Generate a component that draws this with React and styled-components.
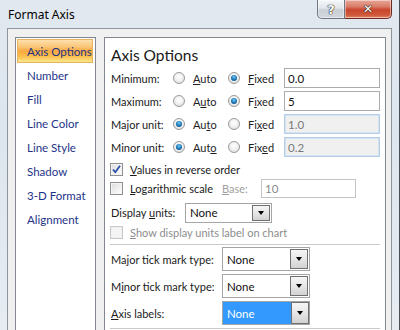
import React from "react";
import styled, { createGlobalStyle } from "styled-components";

const Global = createGlobalStyle`
  html, body { margin: 0; padding: 0; overflow: hidden; }
  body { font-family: "Lato", "Noto Sans", sans-serif; font-size: 11px; color: #1e1e1e; }
`;

const Window = styled.div`
  width: 400px;
  height: 330px;
  box-sizing: border-box;
  background: linear-gradient(180deg, #e1e8f0 0%, #dde5ee 40%, #e6ecf2 100%);
  border-right: 1px solid #4a4f57;
  display: flex;
  flex-direction: column;
  overflow: hidden;
`;

const TitleBar = styled.div`
  height: 28px;
  display: flex;
  justify-content: space-between;
  align-items: flex-start;
  padding: 0 7px 0 8px;
  flex: none;
`;

const Title = styled.div`
  font-family: "Noto Sans", sans-serif;
  font-size: 12px;
  line-height: 12px;
  margin-top: 9px;
  color: #000;
`;

const Caps = styled.div`
  display: flex;
`;

const CapButton = styled.div`
  height: 19px;
  box-sizing: border-box;
  width: ${(p) => p.$w}px;
  border: 1px solid ${(p) => (p.$close ? "#6e2b24" : "#6f7782")};
  border-top: none;
  border-radius: ${(p) => (p.$close ? "0 0 5px 0" : "0 0 0 5px")};
  border-left-width: ${(p) => (p.$close ? 0 : 1)}px;
  background: ${(p) =>
    p.$close
      ? "linear-gradient(180deg, #e8a697 0%, #d9806c 35%, #c9452c 55%, #cf5a3c 85%, #e58c6a 100%)"
      : "linear-gradient(180deg, #f4f6f8 0%, #e2e6eb 45%, #c9ced5 55%, #d2d7de 100%)"};
  box-shadow: inset 0 0 0 1px rgba(255, 255, 255, 0.45);
  display: flex;
  align-items: center;
  justify-content: center;
  color: #fff;
  font-family: "DejaVu Sans", sans-serif;
  font-weight: bold;
  font-size: ${(p) => (p.$close ? 12 : 13)}px;
  line-height: 1;
  text-shadow: 0 0 1px #1b1b1b, 0 0 1px #1b1b1b, 0 0 1px #333;
`;

const Client = styled.div`
  flex: 1;
  margin: 0 7px 0 7px;
  background: #f0f0f0;
  border: 1px solid #8f959c;
  border-bottom: none;
  display: flex;
  align-items: flex-start;
  padding: 8px 6px 0 7px;
  gap: 8px;
`;

const Nav = styled.div`
  width: 79px;
  height: 300px;
  flex: none;
  background: #fff;
  border: 1px solid #828790;
  padding-top: 1px;
  box-sizing: content-box;
`;

const NavItem = styled.div`
  height: 24px;
  box-sizing: border-box;
  margin-left: 1px;
  width: 76px;
  padding-left: 9px;
  display: flex;
  align-items: center;
  color: #1e3488;
  font-size: 11.5px;
  border: 1px solid ${(p) => (p.$active ? "#e5b564" : "transparent")};
  background: ${(p) =>
    p.$active
      ? "linear-gradient(180deg, #fde0ad 0%, #fbc67a 30%, #f9a93e 50%, #fbc04e 75%, #fde68b 100%)"
      : "transparent"};
  white-space: nowrap;
`;

const Panel = styled.div`
  flex: 1;
  height: 300px;
  background: #fff;
  border: 1px solid #828790;
  padding: 6px 5px 0 6px;
  display: flex;
  flex-direction: column;
`;

const Heading = styled.div`
  font-size: 15.5px;
  line-height: 22px;
  color: #1a1a1a;
  height: 23px;
`;

const OptionRow = styled.div`
  height: 20px;
  display: flex;
  align-items: center;
  margin-top: ${(p) => p.$mt ?? 3}px;
`;

const Label = styled.div`
  width: ${(p) => p.$w}px;
  flex: none;
  white-space: nowrap;
  color: ${(p) => (p.$disabled ? "#a0a0a0" : "#1a1a1a")};
`;

const RadioOption = styled.div`
  width: ${(p) => p.$w}px;
  flex: none;
  display: flex;
  align-items: center;
  gap: 8px;
`;

const Radio = styled.span`
  width: 12px;
  height: 12px;
  box-sizing: border-box;
  border-radius: 50%;
  border: 1px solid #9a9a9a;
  background: radial-gradient(circle at 50% 40%, #ffffff 0%, #f0f0f0 50%, #d6d6d6 100%);
  display: flex;
  align-items: center;
  justify-content: center;
  flex: none;
  &::after {
    content: "";
    display: ${(p) => (p.$on ? "block" : "none")};
    width: 6px;
    height: 6px;
    border-radius: 50%;
    background: radial-gradient(circle at 50% 35%, #7fd0f5 0%, #1f7fc0 45%, #0c3f6e 100%);
  }
`;

const Input = styled.div`
  width: ${(p) => p.$w}px;
  height: 20px;
  box-sizing: border-box;
  border: 1px solid ${(p) => (p.$disabled ? "#b5cde8" : "#ababab")};
  box-shadow: ${(p) => (p.$disabled ? "inset 0 0 0 1px #d5e2f0" : "none")};
  background: ${(p) => (p.$disabled ? "#f0f0f0" : "#fff")};
  color: ${(p) => (p.$disabled ? "#7a7a7a" : "#111")};
  padding-left: 3px;
  font-size: 11.5px;
  display: flex;
  align-items: center;
  flex: none;
`;

const GrayInput = styled(Input)`
  border-color: #c4c4c4;
  box-shadow: none;
  height: 19px;
  color: #8a8a8a;
`;

const CheckRow = styled.div`
  height: ${(p) => p.$h ?? 20}px;
  margin-top: ${(p) => p.$mt ?? 0}px;
  display: flex;
  align-items: center;
`;

const CheckBox = styled.span`
  width: 13px;
  height: 13px;
  box-sizing: border-box;
  margin-left: -1px;
  margin-right: 7px;
  border: 1px solid ${(p) => (p.$disabled ? "#c8c8c8" : "#8e8f8f")};
  background: ${(p) =>
    p.$disabled
      ? "#f4f4f4"
      : "linear-gradient(135deg, #dcdcdc 0%, #f0f0f0 55%, #ffffff 100%)"};
  box-shadow: inset 0 0 0 1px ${(p) => (p.$disabled ? "#f0f0f0" : "#f4f4f4")};
  display: flex;
  align-items: center;
  justify-content: center;
  flex: none;
`;

const CheckText = styled.span`
  white-space: nowrap;
  color: ${(p) => (p.$disabled ? "#8d8d8d" : "#1a1a1a")};
  width: ${(p) => (p.$w ? `${p.$w}px` : "auto")};
  flex: none;
`;

const Select = styled.div`
  width: ${(p) => p.$w}px;
  height: ${(p) => p.$h}px;
  box-sizing: border-box;
  border: 1px solid #a5a5a5;
  background: ${(p) => (p.$hl ? "#3399ff" : "#fff")};
  color: ${(p) => (p.$hl ? "#fff" : "#111")};
  font-size: 11.5px;
  display: flex;
  align-items: stretch;
  flex: none;
`;

const SelectValue = styled.div`
  flex: 1;
  padding-left: 4px;
  display: flex;
  align-items: center;
`;

const DropButton = styled.div`
  width: 18px;
  box-sizing: border-box;
  border: 1px solid #707070;
  background: linear-gradient(180deg, #f6f6f6 0%, #e6e6e6 50%, #d2d2d2 100%);
  display: flex;
  align-items: center;
  justify-content: center;
  margin: ${(p) => (p.$hl ? "0" : "1px")};
  margin-left: 0;
  background-clip: padding-box;
  &::after {
    content: "";
    border-left: 3.5px solid transparent;
    border-right: 3.5px solid transparent;
    border-top: 4px solid #000;
  }
`;

const Divider = styled.div`
  height: 1px;
  background: #c9c9c9;
  margin-left: -1px;
  margin-right: 0;
  margin-top: ${(p) => p.$mt}px;
`;

const SelectRow = styled.div`
  height: 24px;
  display: flex;
  align-items: center;
  margin-top: ${(p) => p.$mt ?? 3}px;
`;

const Check = () => (
  <svg width="11" height="11" viewBox="0 0 11 11">
    <path d="M2 5.5 L4.3 8.3 L9 1.8" fill="none" stroke="#2a4fa8" strokeWidth="1.8" strokeLinejoin="round" />
  </svg>
);

const navItems = ["Axis Options", "Number", "Fill", "Line Color", "Line Style", "Shadow", "3-D Format", "Alignment"];

const optionRows = [
  { label: "Minimum:", auto: [<u key="a">A</u>, "uto"], fixed: [<u key="f">F</u>, "ixed"], autoOn: false, value: "0.0", disabled: false },
  { label: "Maximum:", auto: ["A", <u key="a">u</u>, "to"], fixed: ["F", <u key="f">i</u>, "xed"], autoOn: false, value: "5", disabled: false },
  { label: "Major unit:", auto: ["Au", <u key="a">t</u>, "o"], fixed: ["Fi", <u key="f">x</u>, "ed"], autoOn: true, value: "1.0", disabled: true },
  { label: "Minor unit:", auto: ["Aut", <u key="a">o</u>], fixed: ["Fix", <u key="f">e</u>, "d"], autoOn: true, value: "0.2", disabled: true },
];

const DropSelect = ({ w, h, hl, children }) => (
  <Select $w={w} $h={h} $hl={hl}>
    <SelectValue>{children}</SelectValue>
    <DropButton $hl={hl} />
  </Select>
);

export default function App() {
  return (
    <>
      <Global />
      <Window>
        <TitleBar>
          <Title>Format Axis</Title>
          <Caps>
            <CapButton $w={28}>?</CapButton>
            <CapButton $w={47} $close>✕</CapButton>
          </Caps>
        </TitleBar>
        <Client>
          <Nav>
            {navItems.map((n, i) => (
              <NavItem key={n} $active={i === 0}>{n}</NavItem>
            ))}
          </Nav>
          <Panel>
            <Heading>Axis Options</Heading>
            {optionRows.map((r, i) => (
              <OptionRow key={r.label} $mt={i === 0 ? 1 : 3}>
                <Label $w={62}>{r.label}</Label>
                <RadioOption $w={55}>
                  <Radio $on={r.autoOn} />
                  <span>{r.auto}</span>
                </RadioOption>
                <RadioOption $w={56}>
                  <Radio $on={!r.autoOn} />
                  <span>{r.fixed}</span>
                </RadioOption>
                <Input $w={96} $disabled={r.disabled}>{r.value}</Input>
              </OptionRow>
            ))}
            <CheckRow $mt={2}>
              <CheckBox><Check /></CheckBox>
              <CheckText><u>V</u>alues in reverse order</CheckText>
            </CheckRow>
            <CheckRow $h={19}>
              <CheckBox />
              <CheckText $w={92}><u>L</u>ogarithmic scale</CheckText>
              <Label $w={39} $disabled><u>B</u>ase:</Label>
              <GrayInput $w={95}>10</GrayInput>
            </CheckRow>
            <CheckRow $h={19} $mt={5}>
              <Label $w={74}>Display <u>u</u>nits:</Label>
              <DropSelect w={87} h={20}>None</DropSelect>
            </CheckRow>
            <CheckRow>
              <CheckBox $disabled />
              <CheckText $disabled><u>S</u>how display units label on chart</CheckText>
            </CheckRow>
            <Divider $mt={2} />
            <SelectRow $mt={2}>
              <Label $w={111}>Ma<u>j</u>or tick mark type:</Label>
              <DropSelect w={88} h={24}>None</DropSelect>
            </SelectRow>
            <SelectRow>
              <Label $w={111}>M<u>i</u>nor tick mark type:</Label>
              <DropSelect w={88} h={24}>None</DropSelect>
            </SelectRow>
            <SelectRow>
              <Label $w={111}><u>A</u>xis labels:</Label>
              <DropSelect w={88} h={24} hl>None</DropSelect>
            </SelectRow>
            <Divider $mt={3} />
          </Panel>
        </Client>
      </Window>
    </>
  );
}
